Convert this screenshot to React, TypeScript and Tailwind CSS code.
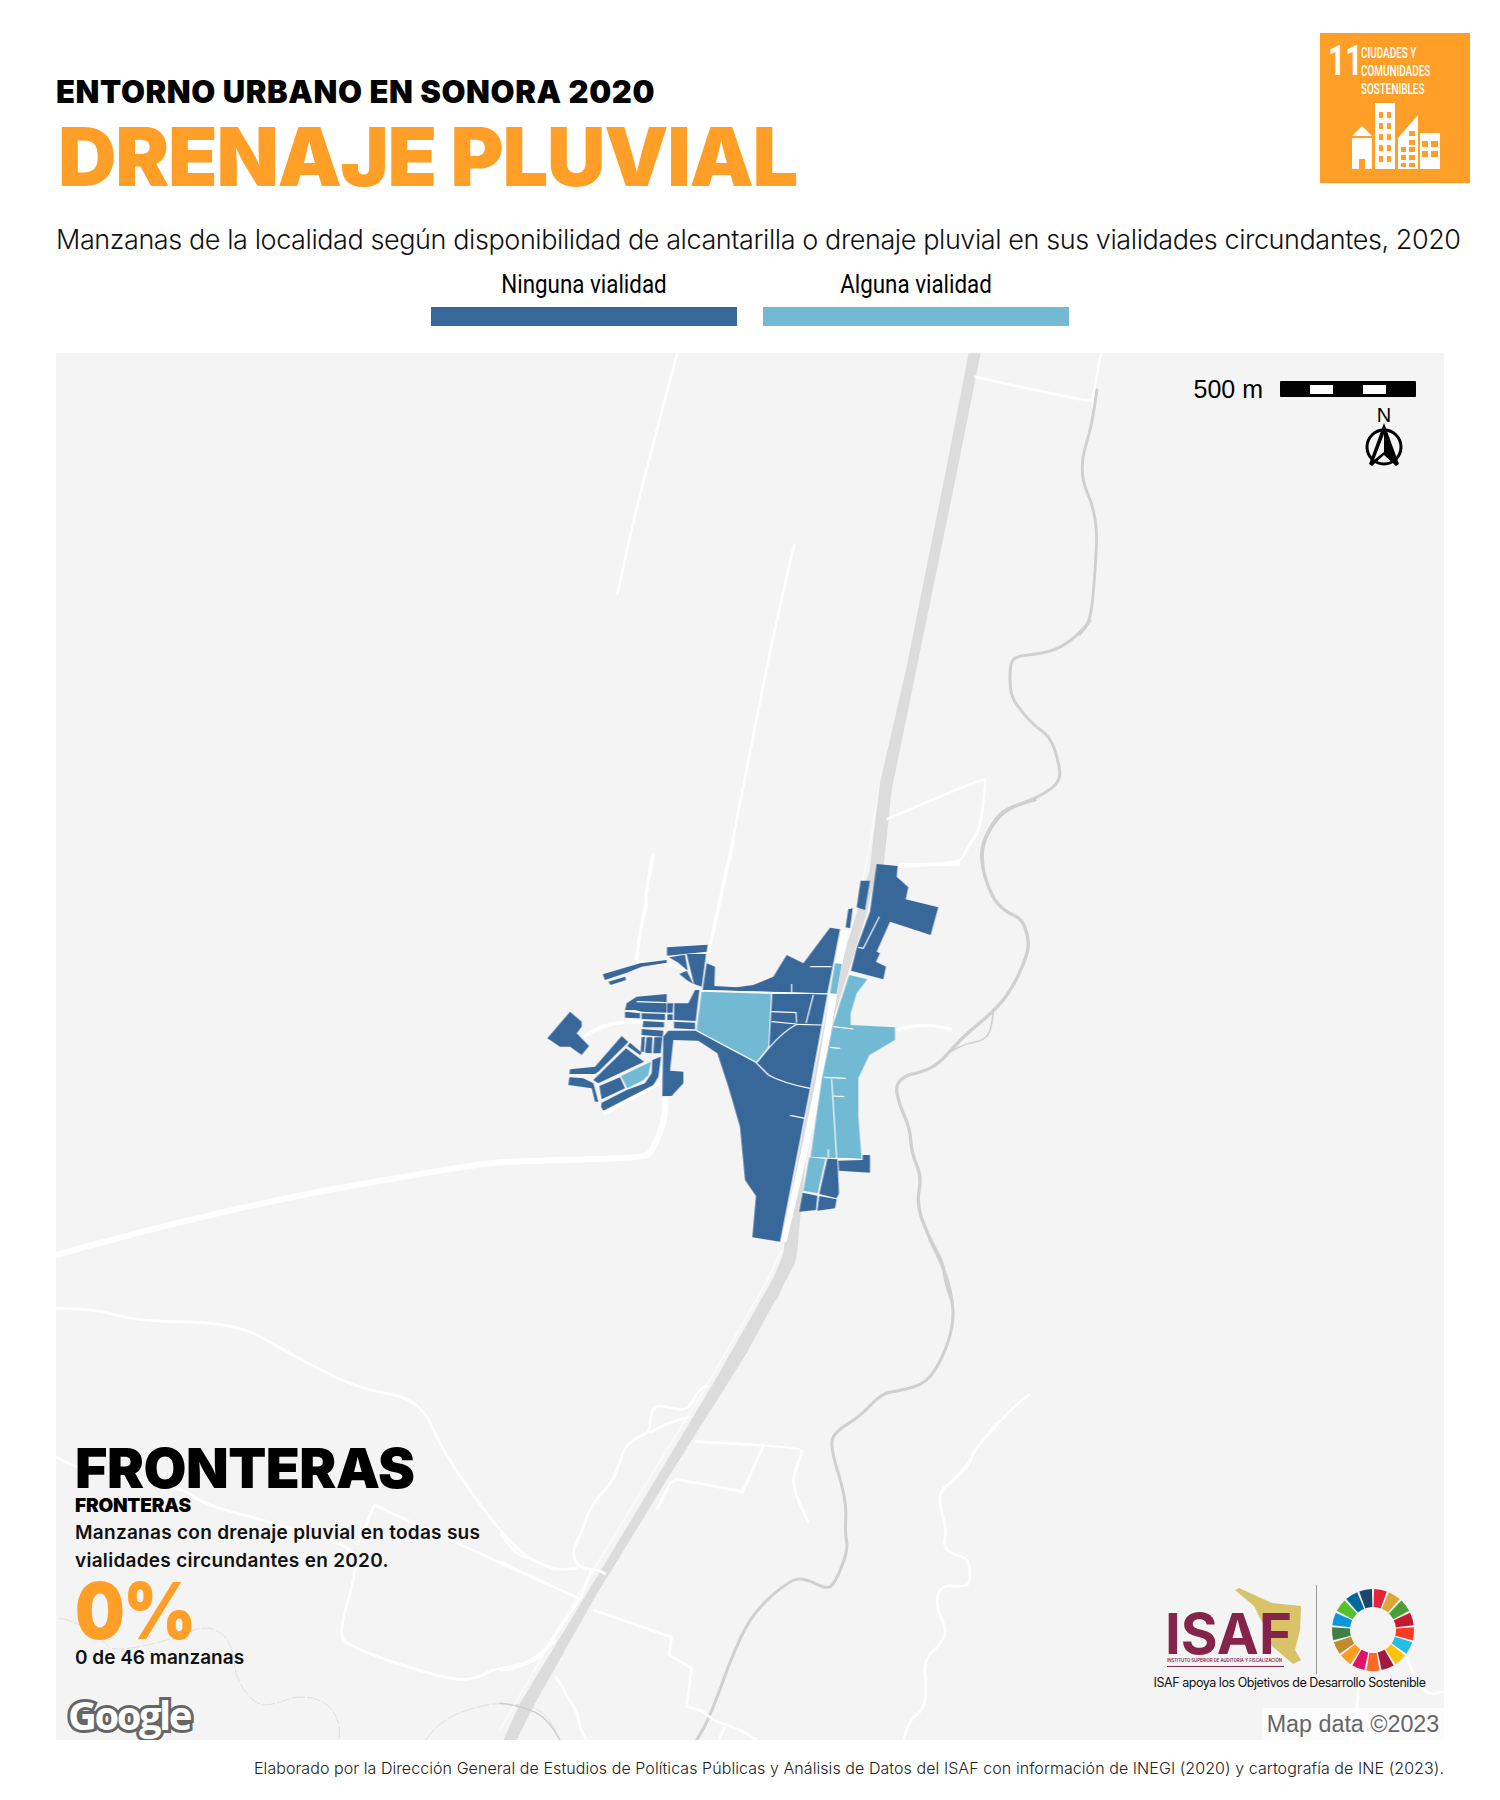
const DARK = "#38679A";
const LIGHT = "#72BAD4";

// manzanas, traced at 3x from (520,840)
const darkBlocks = [
  "150,515 185,545 185,560 170,580 207,618 185,645 150,620 120,620 82,595",
  "248,403 360,370 440,360 440,368 365,380 320,398 255,420",
  "265,425 315,410 318,420 272,435",
  "441,322 563,314 560,335 441,347",
  "447,352 495,344 503,392 475,368",
  "500,342 558,342 545,440 522,432",
  "478,402 500,392 520,432 500,420",
  "560,370 585,380 583,438 650,442 700,435 760,410 800,345 850,370 930,263 960,268 922,460 548,450",
  "757,462 922,462 870,745 800,730 750,705 710,668 748,620",
  "430,590 445,572 528,572 705,665 750,705 870,745 780,1205 697,1192 708,1068 675,1020 660,860 625,740 592,640 535,602 460,600 450,692 490,695 490,730 455,768 427,768",
  "315,510 320,490 350,470 440,462 440,518 365,515 345,510",
  "315,515 360,520 360,535 315,533",
  "365,520 435,522 435,540 365,537",
  "370,543 432,547 432,562 368,562",
  "365,567 430,572 428,590 365,585",
  "442,490 460,490 458,518 442,518",
  "442,523 458,523 458,540 442,540",
  "463,490 505,490 525,450 538,450 527,543 462,540",
  "462,545 525,548 525,568 462,565",
  "365,592 375,590 372,635 362,635",
  "380,592 397,592 395,640 375,638",
  "403,592 427,592 422,640 400,640",
  "305,588 325,606 235,695 225,702 148,702 150,688 225,680",
  "330,608 365,638 360,645 322,618",
  "318,625 372,665 235,730 220,720",
  "148,712 190,715 220,730 235,785 225,785 215,745 145,735",
  "238,738 300,712 315,745 245,778",
  "245,788 320,750 375,730 395,700 397,660 423,650 415,710 400,735 250,812 243,800",
  "1070,72 1133,78 1130,110 1165,142 1157,178 1255,202 1232,285 1110,245 1070,335 1080,340 1068,365 1098,380 1090,418 993,392 1010,325 1050,215",
  "1022,122 1050,122 1035,210 1010,202",
  "985,208 998,205 990,265 977,262",
  "922,956 952,958 957,1060 950,1075 898,1062",
  "848,1058 892,1067 888,1110 838,1115",
  "898,1068 950,1078 945,1105 892,1112",
  "955,962 1028,960 1028,945 1050,945 1050,998 957,992",
];

const lightBlocks = [
  "545,455 753,462 745,620 708,668 600,612 530,570",
  "303,708 393,665 385,705 370,720 322,745",
  "945,370 966,372 950,462 930,460",
  "988,405 1042,418 1010,460 992,520 992,555 1125,562 1125,600 1048,645 1015,715 1015,830 1025,958 872,950 905,720 938,560 960,490",
  "868,952 916,957 893,1060 850,1052",
];

const blockLines = [
  "M548 452L922 462",
  "M530 572L705 665L745 705Q790 730 870 745",
  "M710 668L750 620Q790 575 830 553L905 555",
  "M858 550L880 465",
  "M755 515L828 518L830 548",
  "M755 545L830 552",
  "M350 485L440 488",
  "M940 560L1000 567",
  "M930 622L960 625",
  "M912 712L978 715",
  "M940 768L972 770",
  "M935 718L950 955L1025 958",
  "M925 928L925 952",
  "M870 380L935 380",
  "M815 432L815 458",
  "M810 826L855 835",
  "M1078 230L1030 325L1015 322",
];

const sdgColors = ["#E5243B", "#DDA63A", "#4C9F38", "#C5192D", "#FF3A21", "#26BDE2", "#FCC30B", "#A21942", "#FD6925", "#DD1367", "#FD9D24", "#BF8B2E", "#3F7E44", "#0A97D9", "#56C02B", "#00689D", "#19486A"];

function wedge(i: number) {
  const step = 360 / 17;
  const a0 = ((i * step + 1.5 - 90) * Math.PI) / 180;
  const a1 = (((i + 1) * step - 1.5 - 90) * Math.PI) / 180;
  const pt = (r: number, a: number) => `${(42 + r * Math.cos(a)).toFixed(2)} ${(42 + r * Math.sin(a)).toFixed(2)}`;
  return `M${pt(41, a0)}A41 41 0 0 1 ${pt(41, a1)}L${pt(23, a1)}A23 23 0 0 0 ${pt(23, a0)}Z`;
}

// rounds off a traced polyline, corners become quadratic curves through the midpoints
function smooth(points: string) {
  const n = points.match(/-?[\d.]+/g)!.map(Number);
  const pts: number[][] = [];
  for (let i = 0; i < n.length; i += 2) pts.push([n[i], n[i + 1]]);
  let d = `M${pts[0][0]} ${pts[0][1]}`;
  for (let i = 1; i < pts.length - 1; i++) {
    const mx = (pts[i][0] + pts[i + 1][0]) / 2;
    const my = (pts[i][1] + pts[i + 1][1]) / 2;
    d += `Q${pts[i][0]} ${pts[i][1]} ${mx} ${my}`;
  }
  const last = pts[pts.length - 1];
  return `${d}L${last[0]} ${last[1]}`;
}

function Line({ d, w }: { d: string; w?: number }) {
  return <path d={smooth(d)} strokeWidth={w} />;
}

function MapLayer() {
  return (
    <svg viewBox="56 353 1388 1387" className="absolute inset-0 w-full h-full">
      {/* thin dashed streams */}
      <g transform="translate(56 1240) scale(.3333)" fill="none" stroke="#DEDEDE" strokeWidth="3" strokeDasharray="40 6">
        <Line d="M10 1135L50 1140L140 1200L170 1235L330 1205L430 1160L490 1170L530 1220L540 1320L600 1395L650 1395L730 1365L810 1385L850 1440L850 1500" />
        <Line d="M1110 1500L1150 1440L1280 1395L1340 1390L1450 1400L1500 1470" />
      </g>

      {/* highway */}
      <g fill="#DCDCDC">
        <g transform="translate(560 350) scale(.3333)">
          <polygon points="1226,10 1262,10 1190,370 1075,930 995,1320 970,1560 930,1560 960,1300 1040,950 1160,350" />
        </g>
        <g transform="translate(760 800) scale(.3333)">
          <polygon points="330,210 352,0 390,0 378,100 320,340 270,500 225,640 195,800 135,1100 110,1370 85,1420 50,1500 15,1500 70,1360 90,1200 150,880 200,640 240,510 290,330" />
        </g>
        <g transform="translate(500 1240) scale(.3333)">
          <polygon points="858,0 895,0 885,70 740,340 500,720 280,1080 100,1400 50,1500 10,1500 60,1390 200,1160 400,830 640,430 800,150 850,60" />
        </g>
      </g>

      {/* rivers */}
      <g fill="none" stroke="#D0D0D0" strokeLinejoin="round" strokeLinecap="round">
        <g transform="translate(40 340) scale(.9056)" strokeWidth="3.2">
          <Line d="M1167 55L1163 90L1146 145L1168 195L1165 260L1160 310L1148 325" />
        </g>
        <g transform="translate(560 350) scale(.3333)" strokeWidth="9">
          <Line d="M1590 813L1560 850L1500 895L1440 912L1370 918L1350 940L1350 1020L1365 1060L1420 1125L1470 1160L1495 1230L1503 1295L1440 1340L1345 1375L1300 1420L1265 1490L1270 1560" />
        </g>
        <g transform="translate(760 800) scale(.3333)" strokeWidth="10">
          <Line d="M825 0L750 20L710 50L665 130L665 200L695 290L735 335L785 355L805 410L805 460L755 570L700 635L610 710L570 755L525 800L470 820L440 825L405 855L420 920L450 985L455 1060L485 1130L470 1210L500 1300L550 1390L555 1440L575 1500" />
          <Line d="M700 635L695 690L670 722L620 730L570 755" w={5} />
        </g>
        <g transform="translate(500 1240) scale(.3333)" strokeWidth="9">
          <Line d="M1290 0L1330 80L1355 160L1362 250L1330 350L1280 430L1200 452L1145 460L1080 530L1005 575L990 620L1040 780L1035 880L1045 930L1005 1030L980 1048L915 1015L870 1020L755 1120L690 1265L660 1350L620 1450L590 1500" />
          <g stroke="#CBCBCB">
            <Line d="M0 1390L30 1392L110 1415L150 1450L180 1500" w={4} />
          </g>
        </g>
      </g>

      {/* white roads */}
      <g fill="none" stroke="#FFFFFF" strokeLinejoin="round" strokeLinecap="butt">
        <Line d="M56 1255L221 1209L475 1164L520 1161L643 1158L652 1152L665 1120L665 1097" w={6} />
        <g transform="translate(560 350) scale(.3333)" strokeWidth="8">
          <Line d="M352 10L330 90L220 510L172 735" />
          <Line d="M703 583L640 850L560 1260L500 1560" />
          <path d="M1243 80L1340 102L1560 148" />
          <Line d="M1014 1550L1190 1540L1210 1520L1230 1480L1260 1440L1278 1295L1270 1285L980 1408" />
          <path d="M280 1510L268 1560" />
        </g>
        <path d="M1080 399L1092 401L1101 353" strokeWidth="2.5" />
        <g transform="translate(520 840) scale(.3333)" strokeWidth="10">
          <path d="M640 0L565 340" />
          <Line d="M400 40L375 170L380 195L360 270L350 360" />
          <Line d="M350 368L440 368L500 392" />
          <path d="M1135 75L1320 72" />
          <Line d="M1130 570L1200 550L1295 568" />
          <Line d="M190 590L250 550L370 545" />
          <path d="M245 800L255 820L420 730" />
        </g>
        <g transform="translate(500 1240) scale(.3333)" strokeWidth="8">
          <Line d="M240 1075L130 1240L110 1260L30 1290L0 1290" />
          <path d="M275 990L240 1078L0 965" />
          <Line d="M625 437L605 437L570 500L545 512L480 495L455 505L448 570L440 580L400 598L370 630L340 725L275 790L240 890L215 935L235 985L290 988L318 1003" />
          <Line d="M570 530L500 550L450 578" />
          <Line d="M0 880L45 942L90 955L165 990L235 985" />
          <Line d="M585 605L900 620L908 640L870 725L925 848" />
          <path d="M790 618L728 755L530 718L510 730L470 810" />
          <path d="M280 1110L515 1192L508 1245L575 1285L560 1400L605 1412L640 1440L720 1470L770 1500" />
          <path d="M675 1462L655 1500" />
          <Line d="M165 1310L190 1340L200 1370L230 1410L240 1465L260 1500" />
          <Line d="M1500 540L1420 630L1415 665L1375 710L1320 750L1320 800L1340 870L1330 915L1350 940L1390 950L1410 970L1410 1035L1380 1040L1325 1035L1305 1090L1340 1170L1325 1210L1270 1260L1280 1350L1270 1410L1230 1440L1210 1500" />
        </g>
        <g transform="translate(56 1240) scale(.3333)" strokeWidth="8">
          <Line d="M0 205L115 205L235 243L540 248L700 340L900 445L1095 478L1160 640L1380 940L1500 990" />
          <Line d="M0 650L50 680L150 700L380 745L430 785L540 820L900 915L900 1000L850 1170L870 1220L1190 1325L1280 1310L1300 1290L1400 1275L1450 1245L1500 1200" />
          <path d="M955 795L1500 1045" />
          <path d="M955 795L905 915" />
        </g>
        <g transform="translate(950 1240) scale(.3333)" strokeWidth="8">
          <Line d="M240 463L210 480L75 625L65 660L0 730" />
          <Line d="M1370 1250L1400 1330L1440 1365L1482 1355" />
          <Line d="M1225 1340L1220 1420L1205 1500" />
        </g>
      </g>

      {/* white carriageway beside the highway, through town */}
      <g transform="translate(520 840) scale(.3333)" fill="#FFFFFF">
        <polygon points="962,270 985,270 945,500 910,720 860,950 800,1205 782,1205 840,950 888,720 925,500" />
      </g>

      {/* thin service lines along the highway */}
      <g fill="none" stroke="#FFFFFF" strokeWidth="4" opacity=".85">
        <g transform="translate(500 1240) scale(.3333)">
          <path d="M845 30L800 125L630 420L390 810L195 1130L0 1470" />
        </g>
        <g transform="translate(760 800) scale(.3333)">
          <path d="M352 0L330 130L290 330L262 420" />
        </g>
      </g>

      <g transform="translate(520 840) scale(.3333)">
        {darkBlocks.map((pts) => (
          <polygon key={pts} points={pts} fill={DARK} />
        ))}
        {lightBlocks.map((pts) => (
          <polygon key={pts} points={pts} fill={LIGHT} />
        ))}
        <g fill="none" stroke="#FFFFFF" strokeWidth="3.5">
          {blockLines.map((d) => (
            <path key={d} d={d} />
          ))}
        </g>
      </g>
    </svg>
  );
}

function NorthArrow() {
  return (
    <svg viewBox="0 0 42 46" className="w-[42px] h-[46px]">
      <circle cx="21" cy="25" r="17" fill="none" stroke="#000" strokeWidth="3" />
      <path d="M21 1L36 42L33 44L21 33L9 44L6 42Z" fill="#000" />
      <path d="M21 12L11 38L21 30Z" fill="#F3F3F3" />
    </svg>
  );
}

function ScaleBar() {
  return (
    <div className="flex w-[136px] h-4 rounded-[1px] bg-black items-center pl-[30px]">
      <div className="w-[23px] h-[9px] bg-white" />
      <div className="w-[30px]" />
      <div className="w-[23px] h-[9px] bg-white" />
    </div>
  );
}

function Sdg11() {
  return (
    <div className="w-[150px] h-[150px] bg-[#FF9F27] flex flex-col pl-[8px] pt-[11px] text-white font-['Roboto',sans-serif]">
      <div className="flex h-[54px]">
        <span className="w-[33px] text-[42px] leading-[34px] font-bold inline-block origin-left scale-x-[.72]">11</span>
        <span className="text-[15px] leading-[18px] font-medium inline-block origin-top-left scale-x-[.66] whitespace-nowrap">
          CIUDADES Y
          <br />
          COMUNIDADES
          <br />
          SOSTENIBLES
        </span>
      </div>
      <svg viewBox="0 0 90 66" className="w-[90px] h-[66px] ml-[24px] mt-[5px]" fill="#fff">
        <path d="M0 33L10 23L20 33Z" />
        <path fillRule="evenodd" d="M0 35H20V66H13V56H7V66H0Z" />
        <path fillRule="evenodd" d="M23 0H43V66H23ZM27 9V15H31V9ZM35 9V15H39V9ZM27 20V26H31V20ZM35 20V26H39V20ZM27 31V37H31V31ZM35 31V37H39V31ZM27 42V48H31V42ZM35 42V48H39V42ZM27 53V59H31V53ZM35 53V59H39V53Z" />
        <path fillRule="evenodd" d="M46 35L66 12V66H46ZM49 44V49H54V44H49ZM57 37V42H63V37ZM57 28V33H63V28ZM49 52V57H54V52ZM57 44V49H63V44ZM57 52V57H63V52ZM49 60V64H54V60ZM57 60V64H63V60Z" />
        <path fillRule="evenodd" d="M68 30H88V66H68ZM70 38V44H76V38ZM79 38V44H86V38ZM70 48V54H76V48ZM79 48V54H86V48Z" />
      </svg>
    </div>
  );
}

function IsafLogo() {
  return (
    <svg viewBox="0 0 150 84" className="w-[150px] h-[84px]">
      <polygon points="68,2 72,0 105,15 134,18 133,42 128,62 134,72 126,76 105,58 97,38 87,18" fill="#D9C368" />
      <text x="-2" y="66" fontFamily="Inter" fontWeight="700" fontSize="57" textLength="127" lengthAdjust="spacingAndGlyphs" fill="#84244A">
        ISAF
      </text>
      <text x="0" y="74" fontFamily="Inter" fontWeight="600" fontSize="4.6" textLength="115" lengthAdjust="spacingAndGlyphs" fill="#84244A">
        INSTITUTO SUPERIOR DE AUDITORÍA Y FISCALIZACIÓN
      </text>
      <line x1="0" y1="78.5" x2="117" y2="78.5" stroke="#84244A" strokeWidth="1" />
    </svg>
  );
}

function SdgWheel() {
  return (
    <svg viewBox="0 0 84 84" className="w-[84px] h-[84px]">
      {sdgColors.map((c, i) => (
        <path key={c} d={wedge(i)} fill={c} />
      ))}
    </svg>
  );
}

export default function App() {
  return (
    <div className="w-[1500px] h-[1800px] bg-white text-black font-['Inter',sans-serif]">
      {/* Header */}
      <div className="flex justify-between pl-[56px] pr-[30px] pt-[33px] h-[190px]">
        <div className="pt-[44px]">
          <h2 className="text-[31px] leading-[30px] font-black tracking-[.6px] whitespace-nowrap">ENTORNO URBANO EN SONORA 2020</h2>
          <h1 className="mt-[15px] ml-[2px] text-[81px] leading-[70px] font-black tracking-[-1.3px] text-[#FF9F27] whitespace-nowrap">DRENAJE PLUVIAL</h1>
        </div>
        <Sdg11 />
      </div>

      <p className="mt-[32px] pl-[56px] text-[27px] leading-[36px] font-light tracking-[-.42px] text-[#111] whitespace-nowrap">
        Manzanas de la localidad según disponibilidad de alcantarilla o drenaje pluvial en sus vialidades circundantes, 2020
      </p>

      {/* Legend */}
      <div className="mt-[12px] ml-[431px] flex gap-[26px]">
        <div className="w-[306px] text-center">
          <span className="block text-[26px] leading-[28px] scale-x-[.86] font-['Roboto',sans-serif]">Ninguna vialidad</span>
          <div className="mt-[9px] h-[19px] bg-[#38679A]" />
        </div>
        <div className="w-[306px] text-center">
          <span className="block text-[26px] leading-[28px] scale-x-[.86] font-['Roboto',sans-serif]">Alguna vialidad</span>
          <div className="mt-[9px] h-[19px] bg-[#72BAD4]" />
        </div>
      </div>

      {/* Map */}
      <div className="relative mt-[27px] ml-[56px] w-[1388px] h-[1387px] bg-[#F4F4F4] overflow-hidden">
        <MapLayer />

        <div className="absolute top-[22px] right-[28px] flex items-center gap-[17px] font-['Liberation_Sans',sans-serif] text-[25px] leading-[28px]">
          <span>500 m</span>
          <ScaleBar />
        </div>
        <div className="absolute top-[52px] right-[39px] flex flex-col items-center font-['Liberation_Sans',sans-serif] text-[20px] leading-[20px]">
          <span>N</span>
          <div className="-mt-[3px]">
            <NorthArrow />
          </div>
        </div>

        {/* Locality card */}
        <div className="absolute left-[19px] top-[1090px]">
          <p className="text-[55.5px] leading-[50px] font-black tracking-[-.5px]">FRONTERAS</p>
          <p className="mt-[3px] text-[19px] leading-[20px] font-black tracking-[-.2px]">FRONTERAS</p>
          <p className="mt-[3px] text-[19px] leading-[28px] font-semibold tracking-[.28px] text-[#111] whitespace-nowrap">
            Manzanas con drenaje pluvial en todas sus
            <br />
            vialidades circundantes en 2020.
          </p>
          <p className="mt-[2px] text-[78px] leading-[68px] font-black tracking-[-2px] text-[#FF9F27] origin-left scale-x-[.9]">0%</p>
          <p className="mt-[1px] text-[19px] leading-[24px] font-semibold text-[#111]">0 de 46 manzanas</p>
        </div>

        <div className="absolute left-[12px] bottom-[3px] text-[40px] leading-[44px] font-bold tracking-[-2.5px] text-white font-['Open_Sans',sans-serif] [-webkit-text-stroke:6px_#666] [paint-order:stroke]">
          Google
        </div>

        <div className="absolute right-0 bottom-0 w-[182px] h-[32px] bg-white/70 text-[#666] text-center text-[23.3px] leading-[32px] font-['Liberation_Sans',sans-serif]">
          Map data ©2023
        </div>

        {/* ISAF + ODS */}
        <div className="absolute left-[1098px] top-[1232px] w-[271px] flex flex-col items-center">
          <div className="flex items-center self-start pl-[13px]">
            <IsafLogo />
            <div className="w-px h-[89px] bg-[#999] ml-[-1px]" />
            <div className="ml-[14px]">
              <SdgWheel />
            </div>
          </div>
          <p className="text-[12.5px] leading-[16px] mt-[1px] tracking-[-.45px] text-[#111] whitespace-nowrap">ISAF apoya los Objetivos de Desarrollo Sostenible</p>
        </div>
      </div>

      {/* Credits */}
      <p className="mt-[16px] pr-[56px] text-right text-[16px] leading-[24px] font-light tracking-[.07px] text-[#222] whitespace-nowrap">
        Elaborado por la Dirección General de Estudios de Políticas Públicas y Análisis de Datos del ISAF con información de INEGI (2020) y cartografía de INE (2023).
      </p>
    </div>
  );
}
